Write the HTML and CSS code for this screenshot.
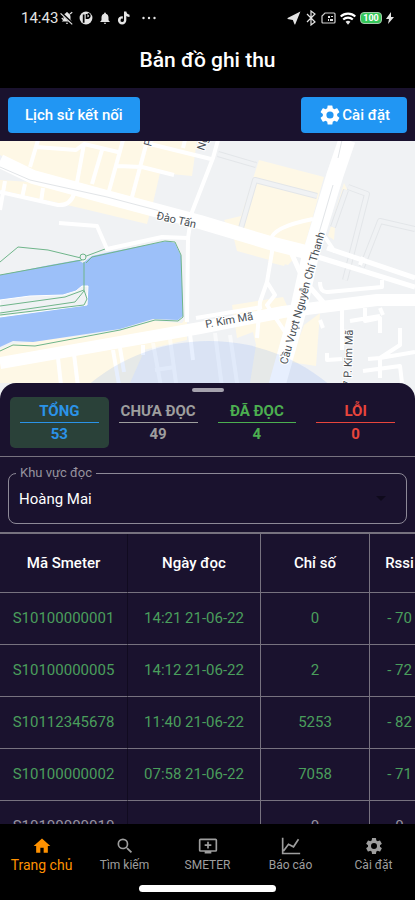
FILE: index.html
```html
<!DOCTYPE html>
<html lang="vi">
<head>
  <meta charset="UTF-8" />
  <meta name="viewport" content="width=device-width, initial-scale=1.0"/>
  <title>Bản đồ ghi thu</title>
  <link rel="stylesheet" href="styles.css">
</head>
<body>
  <div class="app">
    <!-- Status bar -->
    <div class="status-bar">
      <div class="status-left">
        <span class="clock">14:43</span>
        <svg width="14" height="14" viewBox="0 0 24 24"><path d="M12 22a2 2 0 0 0 2-2h-4a2 2 0 0 0 2 2zm8-4v-1l-2-2v-5c0-3-2-6-4.500-6.500V2h-3v1.500C8 4 6 7 6 10v5l-3 3z"/><path d="M2 3l20 19" stroke="#000" stroke-width="4"/><path d="M1 4l20 19M3 12l4 4M17 5l4-3" stroke="#e4e4e4" stroke-width="2"/></svg>
        <svg width="14" height="14" viewBox="0 0 24 24"><circle cx="12" cy="12" r="11"/><path d="M8 20V6M13 5v7h2a3.500 3.500 0 0 0 0-7" fill="none" stroke="#000" stroke-width="3"/></svg>
        <svg width="14" height="14" viewBox="0 0 24 24"><path d="M12 22a2 2 0 0 0 2-2h-4a2 2 0 0 0 2 2zm6-6v-5c0-3.070-1.640-5.640-4.500-6.320V4a1.500 1.500 0 0 0-3 0v.68C7.630 5.360 6 7.920 6 11v5l-2 2v1h16v-1z"/></svg>
        <svg width="14" height="14" viewBox="0 0 24 24"><path d="M12 1h4c.3 3 2.500 5 5.500 5.300v4c-2 0-4-.6-5.500-1.700v7.400a7.200 7.200 0 1 1-7.200-7.200l1.200.1v4.200a3 3 0 1 0 2 2.900z"/></svg>
        <svg class="dots" width="14" height="14" viewBox="0 0 14 14"><circle cx="1.500" cy="7" r="1.200"/><circle cx="7" cy="7" r="1.200"/><circle cx="12.500" cy="7" r="1.200"/></svg>
      </div>
      <div class="status-right">
        <svg width="14" height="14" viewBox="0 0 24 24"><path d="M23 1L1 12v1.500l9 2L13 23h1z"/></svg>
        <svg width="12" height="16" viewBox="0 0 12 16"><path d="M2 4l8 8-4 3V1l4 3-8 8" fill="none" stroke="#e4e4e4" stroke-width="1.200"/></svg>
        <svg width="15" height="12" viewBox="0 0 15 12"><path d="M4 1h9q1 0 1 1v8q0 1-1 1H2q-1 0-1-1V4z" fill="none" stroke="#cfcfcf" stroke-width="1.200"/><path d="M7 4h2v2H7zM10 4h2v1h-2zM7 7h1v2H7zM9 7h3v2H9z"/></svg>
        <svg width="16" height="13" viewBox="0 0 24 19"><path d="M12 19l3.700-4.500a5.500 5.500 0 0 0-7.400 0z"/><path d="M1 6.500a16 16 0 0 1 22 0M4.800 11a10.500 10.500 0 0 1 14.400 0" fill="none" stroke="#fff" stroke-width="3.200"/></svg>
        <span class="battery">100</span>
        <svg width="8" height="12" viewBox="0 0 8 12"><path d="M5 0L0 7h3l-1 5 6-7H5z"/></svg>
      </div>
    </div>

    <header class="title-bar">
      <h1>Bản đồ ghi thu</h1>
    </header>

    <div class="toolbar">
      <button type="button" class="btn">Lịch sử kết nối</button>
      <button type="button" class="btn btn-settings">
        <svg width="24" height="24" viewBox="0 0 24 24"><path d="M19.140 12.940c.04-.3.06-.61.06-.94 0-.32-.02-.64-.07-.94l2.030-1.580a.49.49 0 0 0 .12-.61l-1.920-3.320a.49.49 0 0 0-.59-.22l-2.390.96c-.5-.38-1.030-.7-1.620-.94l-.36-2.540a.48.48 0 0 0-.48-.41h-3.840c-.24 0-.43.17-.47.41l-.36 2.540c-.59.24-1.130.57-1.620.94l-2.390-.96a.48.48 0 0 0-.59.22L2.740 8.870c-.12.21-.08.47.12.61l2.030 1.580c-.05.3-.09.63-.09.94s.02.64.07.94l-2.030 1.580a.49.49 0 0 0-.12.61l1.920 3.320c.12.22.37.29.59.22l2.390-.96c.5.38 1.030.7 1.620.94l.36 2.540c.05.24.24.41.48.41h3.840c.24 0 .44-.17.47-.41l.36-2.540c.59-.24 1.130-.56 1.620-.94l2.390.96c.22.08.47 0 .59-.22l1.920-3.320a.48.48 0 0 0-.12-.61zM12 15.600a3.600 3.600 0 1 1 0-7.200 3.600 3.600 0 0 1 0 7.200z"/></svg>
        Cài đặt
      </button>
    </div>

    <!-- Map -->
    <svg class="map" viewBox="0 1 415 262" preserveAspectRatio="xMidYMin slice">
      <g class="block">
        <path d="M0 0H197L192 36 160 33 153 63 107 52 30 32 0 15z"/>
        <path d="M0 40L30 42 76 54 150 73 147 84 80 68 45 60 0 50z"/>
        <path d="M259 20L324 37 304 108 288 125 237 111 234 99 224 80 241 76z"/>
        <path d="M344 43L347 49 335 87 334 100 328 96z"/>
        <path d="M270 118L286 122 284 126 268 122z"/>
        <path d="M232 165L283 157 290 172 275 243H250L256 205 253 192 237 198z"/>
        <path d="M320 173L316 226 290 222 304 185z"/>
        <path d="M0 209L13 204 120 191 153 181 182 183 187 176V200L0 243z"/>
        <path d="M0 225L150 198 130 243H0z"/>
      </g>

      <g class="water">
        <path d="M0 135L50 125 78 120 83 123 92 116 110 112 167 101 175 103 181 116 183 176 178 180 153 179 120 189 33 202 13 201 0 207z"/>
      </g>
      <path class="shore" d="M0 160L30 156 63 155 76 151 82 146H88L87 165 0 177z"/>
      <g class="trail">
        <path d="M0 122L18 107 48 110 81 118 105 109M0 135L82 120M84 122V150M86 123L92 117 165 101 175 102 181 115 183 177 178 181 155 180 120 190 35 206 13 205 0 211"/>
        <path d="M0 166L65 157 84 150 87 159 84 165 0 175M0 173L75 162 84 151"/>
        <circle class="land" cx="83" cy="117" r="3"/>
      </g>

      <!-- Streets -->
      <g class="lane-edge">
        <path d="M218 14L256 25M317 56L255 40 241 88M348 47L367 54 345 140M346 50L333 87M415 89L380 81 362 127"/>
      </g>
      <g class="lane">
        <path d="M218 14L256 25M317 56L255 40 241 88M348 47L367 54 345 140M346 50L333 87M415 89L380 81 362 127"/>
      </g>
      <g class="street">
        <path d="M38 0L30 27M36 7L76 10 84 4 118 12M150 4L211 19M84 4L76 48M102 10L92 44M123 0L109 51M146 5L132 57M117 26L142 27 174 35M185 0L183 8"/>
        <path d="M0 52L58 65Q70 66 74 54M5 41L0 70M25 44L22 58M43 48L41 62M218 0L213 18 192 72 188 98 187 182"/>
        <path d="M59 83L97 86 107 109 162 97 188 98"/>
        <path d="M313 79Q272 87 271 100L272 112 267 142 260 162 257 198M267 142L275 155 267 165 285 192M196 178L262 167"/>
        <path d="M325 97L335 112M363 117L360 125M320 180L323 188M342 165V210M365 168V181L380 178 380 193M350 181L380 176M380 168L383 175"/>
        <path d="M320 142Q320 153 328 152L382 147 382 140M327 213V220L342 219M400 188V205L380 218V238M368 219L380 218 415 212M363 231L400 226 402 243"/>
        <path d="M58 218L63 263M74 214L80 263M113 210L119 245M120 208L124 232M143 205V215M190 194L193 220"/>
      </g>
      <g class="road">
        <path class="wide" d="M0 21L33 37 110 58 200 82 270 103 306 112"/>
        <path d="M327 108L415 138M318 117L415 147M290 110L308 150M308 145L330 170"/>
        <path class="main" d="M0 223L200 188 283 172 377 160 415 160"/>
        <path class="bridge" d="M347 0L335 35 310 117 299 167 272 263"/>
      </g>
      <path class="divider" d="M0 27L30 40 107 57 160 71M342 0L338 18M333 45L314 110"/>
      <path class="blue-lane" d="M153 203L164 263M170 199L176 243M155 230L175 227M215 193L224 263M230 195L240 263"/>

      <circle class="range" cx="209" cy="389" r="188"/>

      <g class="street-name">
        <text transform="translate(156 79) rotate(13)">Đào Tấn</text>
        <text transform="translate(206 188) rotate(-10)">P. Kim Mã</text>
        <text transform="translate(287 225) rotate(-74)">Cầu Vượt Nguyễn Chí Thanh</text>
        <text transform="translate(351 247) rotate(-88)">7 P. Kim Mã</text>
        <text transform="translate(151 7) rotate(-75)">P.</text>
        <text transform="translate(204 11) rotate(-72)">Ng</text>
      </g>
    </svg>

    <!-- Bottom sheet -->
    <main class="sheet">
      <div class="handle"></div>
      <div class="tabs">
        <button type="button" class="tab total active"><span>TỔNG</span><span>53</span></button>
        <button type="button" class="tab unread"><span>CHƯA ĐỌC</span><span>49</span></button>
        <button type="button" class="tab read"><span>ĐÃ ĐỌC</span><span>4</span></button>
        <button type="button" class="tab error"><span>LỖI</span><span>0</span></button>
      </div>

      <div class="field-wrap">
        <div class="field">
          <label for="areaSelect">Khu vực đọc</label>
          <select id="areaSelect">
            <option>Hoàng Mai</option>
          </select>
          <svg class="caret" width="10" height="5" viewBox="0 0 10 5"><path d="M0 0h10L5 5z"/></svg>
        </div>
      </div>

      <div class="table-wrap">
        <table>
          <colgroup>
            <col class="col-id"><col class="col-date"><col class="col-value"><col class="col-rssi">
          </colgroup>
          <thead>
            <tr><th>Mã Smeter</th><th>Ngày đọc</th><th>Chỉ số</th><th>Rssi</th></tr>
          </thead>
          <tbody>
            <tr><td>S10100000001</td><td>14:21 21-06-22</td><td>0</td><td>- 70</td></tr>
            <tr><td>S10100000005</td><td>14:12 21-06-22</td><td>2</td><td>- 72</td></tr>
            <tr><td>S10112345678</td><td>11:40 21-06-22</td><td>5253</td><td>- 82</td></tr>
            <tr><td>S10100000002</td><td>07:58 21-06-22</td><td>7058</td><td>- 71</td></tr>
            <tr class="pending"><td>S10100000010</td><td></td><td>0</td><td>0</td></tr>
          </tbody>
        </table>
      </div>
    </main>

    <!-- Bottom navigation -->
    <nav class="bottom-nav">
      <a href="#home" class="active">
        <svg width="20" height="20" viewBox="0 0 24 24"><path d="M10 20v-6h4v6h5v-8h3L12 3 2 12h3v8z"/></svg>
        <span>Trang chủ</span>
      </a>
      <a href="#search">
        <svg width="20" height="20" viewBox="0 0 24 24"><path d="M15.500 14h-.79l-.28-.27A6.470 6.470 0 0 0 16 9.500 6.500 6.500 0 1 0 9.500 16c1.610 0 3.090-.59 4.230-1.570l.27.28v.79l5 4.990L20.490 19zm-6 0a4.500 4.500 0 1 1 0-9 4.500 4.500 0 0 1 0 9z"/></svg>
        <span>Tìm kiếm</span>
      </a>
      <a href="#smeter">
        <svg width="20" height="20" viewBox="0 0 24 24"><path d="M21 3H3a2 2 0 0 0-2 2v12a2 2 0 0 0 2 2h5v2h8v-2h5a2 2 0 0 0 2-2V5a2 2 0 0 0-2-2zm0 14H3V5h18zm-5-7v2h-3v3h-2v-3H8v-2h3V7h2v3z"/></svg>
        <span>SMETER</span>
      </a>
      <a href="#report">
        <svg width="20" height="20" viewBox="0 0 24 24"><path d="M2 2v19h21M3 18l6-8 6 3 6-9" fill="none" stroke="#9e9e9e" stroke-width="2"/></svg>
        <span>Báo cáo</span>
      </a>
      <a href="#settings">
        <svg width="20" height="20" viewBox="0 0 24 24"><path d="M19.140 12.940c.04-.3.06-.61.06-.94 0-.32-.02-.64-.07-.94l2.030-1.580a.49.49 0 0 0 .12-.61l-1.920-3.320a.49.49 0 0 0-.59-.22l-2.390.96c-.5-.38-1.030-.7-1.620-.94l-.36-2.540a.48.48 0 0 0-.48-.41h-3.840c-.24 0-.43.17-.47.41l-.36 2.540c-.59.24-1.130.57-1.620.94l-2.390-.96a.48.48 0 0 0-.59.22L2.740 8.870c-.12.21-.08.47.12.61l2.030 1.580c-.05.3-.09.63-.09.94s.02.64.07.94l-2.030 1.580a.49.49 0 0 0-.12.61l1.920 3.320c.12.22.37.29.59.22l2.390-.96c.5.38 1.030.7 1.620.94l.36 2.540c.05.24.24.41.48.41h3.840c.24 0 .44-.17.47-.41l.36-2.540c.59-.24 1.130-.56 1.620-.94l2.390.96c.22.08.47 0 .59-.22l1.920-3.320a.48.48 0 0 0-.12-.61zM12 15.600a3.600 3.600 0 1 1 0-7.200 3.600 3.600 0 0 1 0 7.200z"/></svg>
        <span>Cài đặt</span>
      </a>
    </nav>
    <div class="home-indicator"></div>
  </div>
</body>
</html>
```
FILE: styles.css
```css
* {
  box-sizing: border-box;
}
body {
  margin: 0;
  font-family: Roboto, sans-serif;
  background-color: #000;
  color: #fff;
}
button, select {
  font-family: inherit;
}
.app {
  display: flex;
  flex-direction: column;
  height: 100vh;
  overflow: hidden;
  background-color: #000;
}

/* Status bar */
.status-bar {
  display: flex;
  justify-content: space-between;
  align-items: center;
  flex-shrink: 0;
  height: 36px;
  padding: 0 21px;
}
.status-left,
.status-right {
  display: flex;
  align-items: center;
}
.status-left {
  gap: 5px;
}
.status-right {
  gap: 4px;
}
.status-bar svg {
  fill: #e4e4e4;
}
.status-left .dots {
  margin-left: 6px;
}
.clock {
  font-size: 15px;
  color: #e4e4e4;
  margin-right: -3px;
}
.battery {
  width: 22px;
  height: 12px;
  line-height: 10px;
  border: 1px solid #a5c9aa;
  border-radius: 4px;
  background-color: #34c759;
  font-size: 9px;
  font-weight: bold;
  text-align: center;
}

/* Title and toolbar */
.title-bar {
  display: flex;
  justify-content: center;
  align-items: center;
  flex-shrink: 0;
  height: 52px;
  padding-bottom: 4px;
}
h1 {
  margin: 0;
  font-size: 21px;
  font-weight: 500;
}
.toolbar {
  display: flex;
  justify-content: space-between;
  flex-shrink: 0;
  padding: 9px 8px 8px;
  background-color: #1a122e;
}
.btn {
  display: flex;
  align-items: center;
  height: 36px;
  padding: 0 17px;
  border: none;
  border-radius: 4px;
  background-color: #2196f3;
  color: #fff;
  font-size: 15px;
  font-weight: 500;
  cursor: pointer;
}
.btn svg {
  fill: #fff;
}

/* Map */
.map {
  display: block;
  flex-shrink: 0;
  width: 100%;
  height: 262px;
  background-color: #f0f2f4;
}
.map path {
  fill: none;
  stroke-linejoin: round;
}
.map .block path {
  fill: #fef8e6;
}
.map .land,
.map .shore {
  fill: #f0f2f4;
}
.map .shore {
  stroke: #fff;
}
.map .water path {
  fill: #9cc0f9;
}
.trail {
  stroke: #6fb58a;
  stroke-width: 1;
}
.lane-edge {
  stroke: #e3e6e9;
  stroke-width: 6;
}
.lane {
  stroke: #f0f2f4;
  stroke-width: 4;
}
.street {
  stroke: #fff;
  stroke-width: 4;
}
.road {
  stroke: #fff;
  stroke-width: 5;
}
.road .wide {
  stroke-width: 14;
}
.road .main {
  stroke-width: 12;
}
.road .bridge {
  stroke-width: 17;
}
.divider {
  stroke: #e2e5e8;
}
.blue-lane {
  stroke: #fff;
  stroke-opacity: 0.6;
  stroke-width: 4;
}
.range {
  fill: #4285f4;
  fill-opacity: 0.13;
}
.street-name {
  fill: #4a4f55;
  stroke: #fff;
  stroke-width: 2;
  paint-order: stroke;
  font-size: 11px;
}

/* Bottom sheet */
.sheet {
  position: relative;
  flex: 1;
  min-height: 0;
  margin-top: -20px;
  overflow: hidden;
  border-radius: 16px 16px 0 0;
  background-color: #1a122e;
}
.handle {
  width: 32px;
  height: 4px;
  margin: 5px auto;
  border-radius: 2px;
  background-color: #a5a2ad;
}
.tabs {
  display: flex;
  padding: 0 10px 8px;
  border-bottom: 1px solid #77727f;
}
.tab {
  flex: 1;
  padding: 3px 10px;
  border: none;
  border-radius: 5px;
  background: none;
  font-size: 15px;
  font-weight: bold;
  cursor: pointer;
}
.tab span {
  display: block;
  line-height: 22px;
}
.tab span:first-child {
  border-bottom: 1px solid;
}
.tab.active {
  background-color: #2a4139;
}
.total {
  color: #2b93e8;
}
.unread {
  color: #9e9e9e;
}
.read {
  color: #4caf50;
}
.error {
  color: #e8453c;
}

/* Area drop-down */
.field-wrap {
  padding: 16px 8px 8px;
}
.field {
  position: relative;
}
.field label {
  position: absolute;
  top: -9px;
  left: 8px;
  padding: 0 4px;
  background-color: #1a122e;
  color: #96929e;
  font-size: 13px;
  line-height: 18px;
}
.field select {
  display: block;
  width: 100%;
  height: 51px;
  padding: 0 10px;
  appearance: none;
  border: 1px solid #8d8997;
  border-radius: 8px;
  background: none;
  color: #fff;
  font-size: 15px;
}
.caret {
  position: absolute;
  top: 23px;
  right: 21px;
  fill: #0f0a1c;
}

/* Readings table */
.table-wrap {
  overflow: hidden;
}
table {
  width: 100%;
  min-width: 430px;
  table-layout: fixed;
  border-collapse: separate;
  border-spacing: 0;
  border-top: 2px solid #77727f;
  font-size: 15px;
}
.col-id {
  width: 128px;
}
.col-date {
  width: 133px;
}
.col-value {
  width: 109px;
}
th, td {
  padding: 0;
  border-right: 1px solid #77727f;
  border-bottom: 1px solid #77727f;
  text-align: center;
}
th:first-child,
td:first-child {
  border-right-color: #110b20;
}
th {
  height: 59px;
  font-weight: 500;
}
td {
  height: 52px;
  padding-bottom: 1px;
  color: #4a9e5c;
}
.pending td {
  color: #96929e;
}

/* Bottom navigation */
.bottom-nav {
  display: flex;
  flex-shrink: 0;
  height: 61px;
  padding-top: 12px;
}
.bottom-nav a {
  display: flex;
  flex: 1;
  flex-direction: column;
  align-items: center;
  color: #9e9e9e;
  font-size: 12px;
  line-height: 18px;
  text-decoration: none;
}
.bottom-nav svg {
  fill: #9e9e9e;
}
.bottom-nav .active {
  color: #ff9100;
  font-size: 14px;
}
.bottom-nav .active svg {
  fill: #ff9100;
}
.home-indicator {
  flex-shrink: 0;
  width: 33%;
  height: 7px;
  margin: 0 auto 8px;
  border-radius: 4px;
  background-color: #fff;
}
```
